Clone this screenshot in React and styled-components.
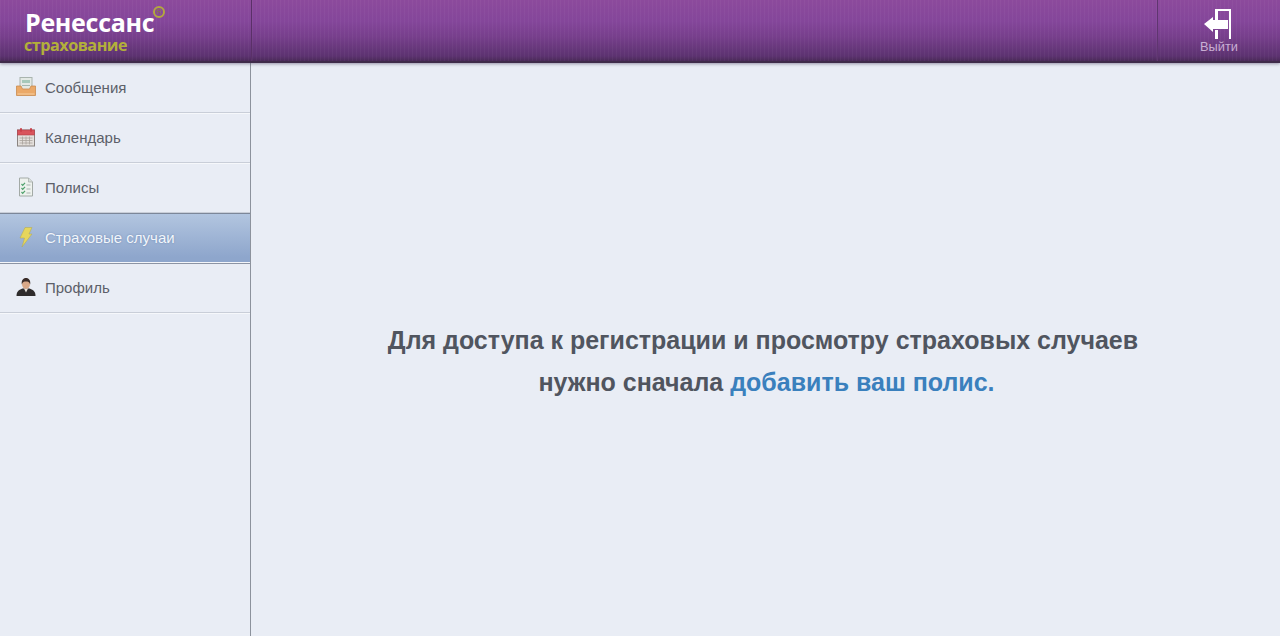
import React from "react"
import styled, { createGlobalStyle } from "styled-components"

const GlobalStyle = createGlobalStyle`
  html, body {
    margin: 0;
    height: 100%;
    overflow: hidden;
    background: #e9edf5;
    font-family: "Liberation Sans", Arial, sans-serif;
  }
  #root {
    height: 100%;
  }
`

const Page = styled.div`
  display: flex;
  flex-direction: column;
  height: 636px;
`

const Header = styled.header`
  display: flex;
  flex: 0 0 63px;
  box-sizing: border-box;
  height: 63px;
  background:
    repeating-linear-gradient(90deg, rgba(255, 255, 255, 0.035) 0 1px, transparent 1px 4px),
    linear-gradient(#8c4a9c 0%, #84469a 35%, #773f8c 60%, #5c3270 92%, #4a2a58 100%);
  border-bottom: 2px solid #3f2b4a;
  box-shadow: 0 1px 3px rgba(70, 60, 90, 0.5);
  position: relative;
  z-index: 1;
`

const LogoCell = styled.div`
  display: flex;
  flex-direction: column;
  box-sizing: border-box;
  width: 252px;
  padding: 8px 0 0 25px;
  border-right: 1px solid #5a3068;
  position: relative;
`

const LogoName = styled.div`
  font-family: "Open Sans", sans-serif;
  font-weight: 700;
  font-size: 25px;
  line-height: 28px;
  letter-spacing: -0.3px;
  color: #fff;
`

const LogoSub = styled.div`
  font-family: "Open Sans", sans-serif;
  font-weight: 700;
  font-size: 16.2px;
  line-height: 18px;
  letter-spacing: -0.5px;
  margin-left: -1px;
  color: #b3b03a;
`

const LogoMark = styled.span`
  position: absolute;
  left: 153px;
  top: 6px;
  box-sizing: border-box;
  width: 12px;
  height: 12px;
  border: 2px solid #b3a83e;
  border-radius: 50%;
  color: #8c7a3a;
  font-size: 7px;
  line-height: 8px;
  text-align: center;
`

const HeaderFill = styled.div`
  flex: 1;
`

const ExitCell = styled.a`
  display: flex;
  flex-direction: column;
  align-items: center;
  width: 123px;
  padding-top: 9px;
  box-sizing: border-box;
  border-left: 1px solid #5f3570;
  color: #c9aed3;
  font-size: 12.8px;
  line-height: 14px;
`

const ExitIcon = styled.svg`
  display: block;
  width: 30px;
  height: 30px;
  margin: 0 0 1px -2px;
`

const Body = styled.div`
  display: flex;
  flex: 1;
  min-height: 0;
`

const Sidebar = styled.nav`
  flex: 0 0 250px;
  border-right: 1px solid #8c929c;
`

const MenuItem = styled.a`
  display: flex;
  align-items: center;
  box-sizing: border-box;
  height: 50px;
  padding: 0 0 1px 16px;
  gap: 9px;
  font-size: 15px;
  color: ${p => (p.$active ? "#f2f6fb" : "#5c6069")};
  background: ${p =>
    p.$active ? "linear-gradient(#b3c6e0, #8ea6cc 90%)" : "transparent"};
  border-bottom: 1px solid ${p => (p.$active ? "#f4f6fa" : "#c9ced8")};
  box-shadow: ${p =>
    p.$active
      ? "inset 0 1px 0 #7c8799, 0 1px 0 #8c94a4"
      : "0 1px 0 #f6f8fb"};
  text-shadow: ${p => (p.$active ? "0 0 2px #6c86b0" : "none")};
`

const IconSvg = styled.svg`
  flex: 0 0 20px;
  width: 20px;
  height: 20px;
`

const Main = styled.main`
  flex: 1;
  display: flex;
  align-items: center;
  justify-content: center;
  padding: 23px 5px 0 0;
`

const Notice = styled.p`
  margin: 0;
  text-align: center;
  font-size: 25px;
  line-height: 42px;
  font-weight: 700;
  color: #50555f;
`

const NoticeLine = styled.span`
  display: block;
  padding-left: ${p => p.$indent || 0}px;
`

const NoticeLink = styled.a`
  color: #3a80bd;
`

const InboxIcon = () => (
  <IconSvg viewBox="0 0 20 20">
    <rect x="4" y="0.5" width="12" height="13" fill="#e3e9e5" stroke="#a9b4ae" />
    <rect x="6" y="3" width="8" height="3" fill="#a6c9ba" />
    <path d="M6 8.5h8" stroke="#a4b8b0" />
    <path d="M0.5 9h4.5l1.5 3h7l1.5-3h4.5v9.5H0.5z" fill="#eba968" stroke="#c98a4e" strokeWidth="0.8" />
    <path d="M1.5 17h17" stroke="#f6cfa0" />
  </IconSvg>
)

const CalendarIcon = () => (
  <IconSvg viewBox="0 0 20 20">
    <rect x="1.5" y="3" width="17" height="16" fill="#e4e0dc" stroke="#8a8480" />
    <rect x="1.5" y="3" width="17" height="5" fill="#d9545c" stroke="#b03e48" strokeWidth="0.6" />
    <rect x="4" y="1" width="2" height="4" rx="1" fill="#c8404a" />
    <rect x="14" y="1" width="2" height="4" rx="1" fill="#c8404a" />
    <path d="M3.5 11h13M3.5 13.5h13M3.5 16h13M6.5 9.5v8M10 9.5v8M13.5 9.5v8" stroke="#a8a29c" strokeWidth="0.8" />
  </IconSvg>
)

const PolicyIcon = () => (
  <IconSvg viewBox="0 0 20 20">
    <path d="M3.5 1h9l4 4v14h-13z" fill="#eef2ee" stroke="#a3aaa6" />
    <path d="M12.5 1v4h4" fill="#d8dedb" stroke="#a3aaa6" strokeWidth="0.7" />
    <path d="M5.5 7l1.2 1.4L9 5.8M5.5 11l1.2 1.4L9 9.8M5.5 15l1.2 1.4L9 13.8" fill="none" stroke="#4da06a" strokeWidth="1.2" />
    <path d="M10.500 8h4M10.500 12h4M10.500 16h4" stroke="#a9b4ae" />
  </IconSvg>
)

const BoltIcon = () => (
  <IconSvg viewBox="0 0 20 20">
    <path d="M9 0.5h7L13 7h3L6 20l2.500-9H4z" fill="#e6d65c" stroke="#b0a850" strokeWidth="0.5" />
  </IconSvg>
)

const ProfileIcon = () => (
  <IconSvg viewBox="0 0 20 20">
    <path d="M0.5 19c0-5 3-6.500 6-7.500h7c3 1 6 2.500 6 7.500z" fill="#2f2c2c" />
    <path d="M8 11.500h4L10 15.500z" fill="#e8e4de" />
    <ellipse cx="10" cy="7" rx="4" ry="5" fill="#d8a888" />
    <path d="M5.800 7.500C5 2.500 8 1 10 1s5 1.500 4.200 6.500C13.500 5 12 4.500 10 4.500S6.500 5 5.800 7.500z" fill="#3a2c28" />
  </IconSvg>
)

const items = [
  { label: "Сообщения", Icon: InboxIcon },
  { label: "Календарь", Icon: CalendarIcon },
  { label: "Полисы", Icon: PolicyIcon },
  { label: "Страховые случаи", Icon: BoltIcon, active: true },
  { label: "Профиль", Icon: ProfileIcon },
]

const App = () => (
  <Page>
    <GlobalStyle />
    <Header>
      <LogoCell>
        <LogoName>Ренессанс</LogoName>
        <LogoSub>страхование</LogoSub>
        <LogoMark>R</LogoMark>
      </LogoCell>
      <HeaderFill />
      <ExitCell>
        <ExitIcon viewBox="0 0 30 30">
          <path d="M12 0h16v30h-2V2H15v9h-3zM12 21h3v9h-3z" fill="#fff" />
          <path d="M1 15L10 8v3h15v9H10v3z" fill="#fff" />
        </ExitIcon>
        Выйти
      </ExitCell>
    </Header>
    <Body>
      <Sidebar>
        {items.map(({ label, Icon, active }) => (
          <MenuItem key={label} $active={active}>
            <Icon />
            {label}
          </MenuItem>
        ))}
      </Sidebar>
      <Main>
        <Notice>
          <NoticeLine>Для доступа к регистрации и просмотру страховых случаев</NoticeLine>
          <NoticeLine $indent={7}>
            нужно сначала <NoticeLink>добавить ваш полис.</NoticeLink>
          </NoticeLine>
        </Notice>
      </Main>
    </Body>
  </Page>
)

export default App
